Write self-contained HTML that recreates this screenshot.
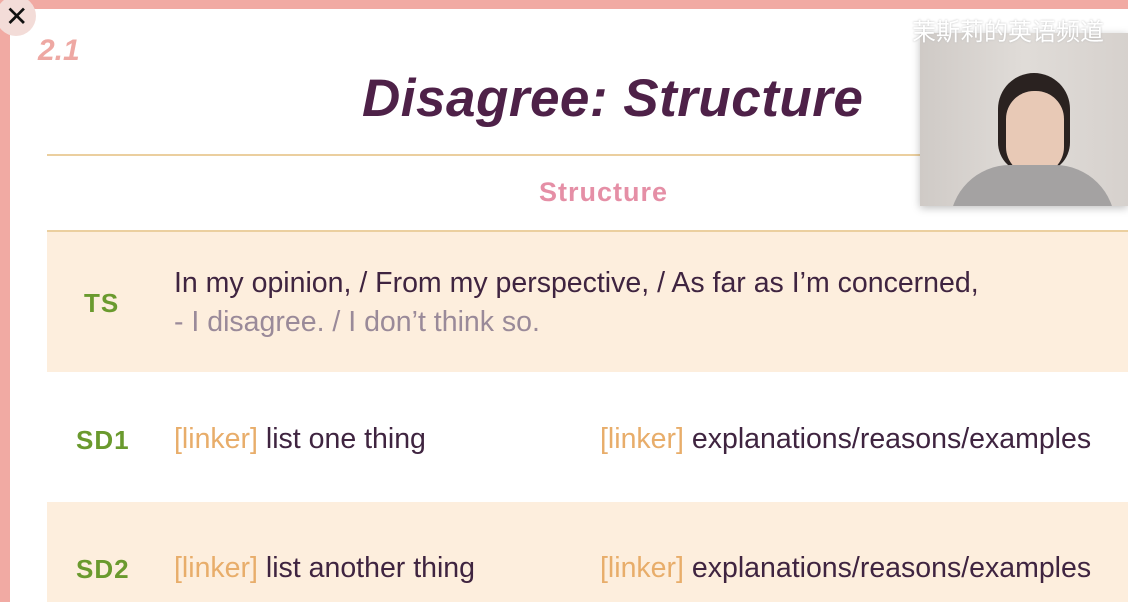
<!DOCTYPE html>
<html><head><meta charset="utf-8"><style>
*{margin:0;padding:0;box-sizing:border-box}
body{width:1128px;height:602px;overflow:hidden;background:#fff;position:relative;font-family:"Liberation Sans","Noto Sans CJK SC",sans-serif}
.abs{position:absolute}
.t{font-size:28.5px;color:#3f2440;white-space:nowrap}
.o{color:#e8ad6a}
.g{color:#6a9a2e;font-weight:bold;font-size:26px;letter-spacing:1px}
</style></head><body>
<div class="abs" style="left:0;top:0;width:1128px;height:9px;background:#f1aaa3"></div>
<div class="abs" style="left:0;top:0;width:10px;height:602px;background:#f1aaa3"></div>
<div class="abs" style="left:-4px;top:-4px;width:40px;height:40px;border-radius:50%;background:#f3dcd8"></div>
<div class="abs" style="left:5px;top:0px;font-size:28px;color:#111">✕</div>
<div class="abs" style="left:38px;top:34px;font-size:30px;font-weight:bold;color:#eea8a3;font-style:italic">2.1</div>
<div class="abs" style="left:362px;top:68px;font-size:53px;font-weight:bold;font-style:italic;color:#4e2148;letter-spacing:0.5px">Disagree: Structure</div>
<div class="abs" style="left:47px;top:154px;width:875px;height:2px;background:#ebcf9f"></div>
<div class="abs" style="left:539px;top:177px;font-size:27px;font-weight:bold;color:#e58fa6;letter-spacing:1px">Structure</div>
<div class="abs" style="left:47px;top:230px;width:1081px;height:2px;background:#ebcf9f"></div>
<div class="abs" style="left:47px;top:232px;width:1081px;height:140px;background:#fdeedd"></div>
<div class="abs" style="left:47px;top:502px;width:1081px;height:100px;background:#fdeedd"></div>
<div class="abs g" style="left:84px;top:288px">TS</div>
<div class="abs t" style="left:174px;top:267px">In my opinion, / From my perspective, / As far as I’m concerned,</div>
<div class="abs t" style="left:174px;top:306px;color:#9a8a99">- I disagree. / I don’t think so.</div>
<div class="abs g" style="left:76px;top:425px">SD1</div>
<div class="abs t" style="left:174px;top:423px"><span class="o">[linker]</span> list one thing</div>
<div class="abs t" style="left:600px;top:423px"><span class="o">[linker]</span> explanations/reasons/examples</div>
<div class="abs g" style="left:76px;top:554px">SD2</div>
<div class="abs t" style="left:174px;top:552px"><span class="o">[linker]</span> list another thing</div>
<div class="abs t" style="left:600px;top:552px"><span class="o">[linker]</span> explanations/reasons/examples</div>
<div class="abs" style="left:920px;top:33px;width:208px;height:173px;background:linear-gradient(90deg,#cfcac6,#e0dcd8 50%,#d6d1cd);box-shadow:0 2px 8px rgba(0,0,0,.25);overflow:hidden">
<div class="abs" style="left:78px;top:40px;width:72px;height:100px;border-radius:40px 40px 34px 34px;background:#2a2220"></div>
<div class="abs" style="left:86px;top:58px;width:58px;height:84px;border-radius:28px;background:#e8c9b6"></div>
<div class="abs" style="left:30px;top:132px;width:165px;height:70px;border-radius:60px 60px 0 0;background:#a4a2a2"></div>
</div>
<div class="abs" style="left:912px;top:12px;font-size:24px;color:#fff;font-family:'Noto Sans CJK SC',sans-serif;text-shadow:0 0 2px #bbb">茉斯莉的英语频道</div>
</body></html>
